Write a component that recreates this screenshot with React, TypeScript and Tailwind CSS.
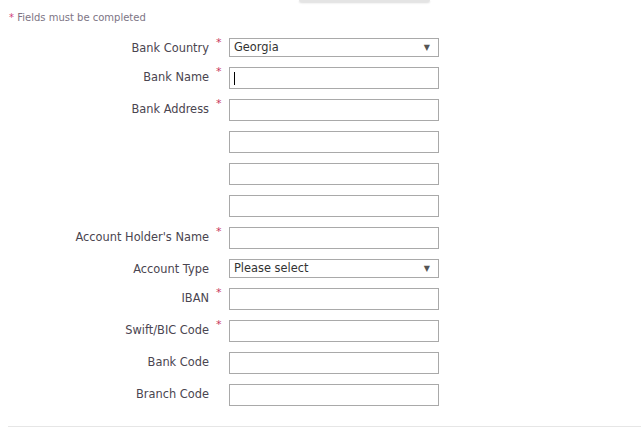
const fields: { label: string; required?: boolean; kind: "input" | "select" | "extra"; value?: string; caret?: boolean }[] = [
  { label: "Bank Country", required: true, kind: "select", value: "Georgia" },
  { label: "Bank Name", required: true, kind: "input", caret: true },
  { label: "Bank Address", required: true, kind: "input" },
  { label: "", kind: "extra" },
  { label: "", kind: "extra" },
  { label: "", kind: "extra" },
  { label: "Account Holder's Name", required: true, kind: "input" },
  { label: "Account Type", kind: "select", value: "Please select" },
  { label: "IBAN", required: true, kind: "input" },
  { label: "Swift/BIC Code", required: true, kind: "input" },
  { label: "Bank Code", kind: "input" },
  { label: "Branch Code", kind: "input" },
];

const App = () => {
  return (
    <div className="w-[641px] h-[445px] bg-white overflow-hidden font-['DejaVu_Sans',sans-serif] text-[#4a4550]">
      {/* cut-off button at top */}
      <div className="ml-[299px] w-[131px] h-[2px] bg-[#e4e4e4] rounded-b shadow-[0_1px_2px_rgba(0,0,0,0.15)]" />

      <div className="pl-[9px] pt-[9px] text-[10px] leading-[14px] text-[#7d7585]">
        <span className="text-[#d0407a]">*</span> Fields must be completed
      </div>

      <div className="mt-[13px] flex flex-col">
        {fields.map((f, i) => (
          <div key={i} className="flex items-start mb-[10px]">
            <div className="w-[209px] text-right text-[11.4px] leading-[13px] pt-[4px]">
              {f.label}
            </div>
            <div className="w-[20px] pl-[7px] text-[11px] leading-[10px] text-[#c8385c]">
              {f.required ? "*" : ""}
            </div>
            {f.kind === "select" ? (
              <div className="w-[210px] h-[19px] border border-[#a9a9a9] flex items-center justify-between pl-[4px] pr-[8px] text-[11.4px] text-[#333]">
                <span>{f.value}</span>
                <span className="text-[8px] text-[#555]">▼</span>
              </div>
            ) : (
              <div className="w-[210px] h-[22px] border border-[#a9a9a9] flex items-center pl-[4px]">
                {f.caret && <span className="w-px h-[13px] bg-black" />}
              </div>
            )}
          </div>
        ))}
      </div>

      <div className="ml-[8px] mt-[10px] h-px bg-[#e6e6e6]" />
    </div>
  );
};

export default App;
